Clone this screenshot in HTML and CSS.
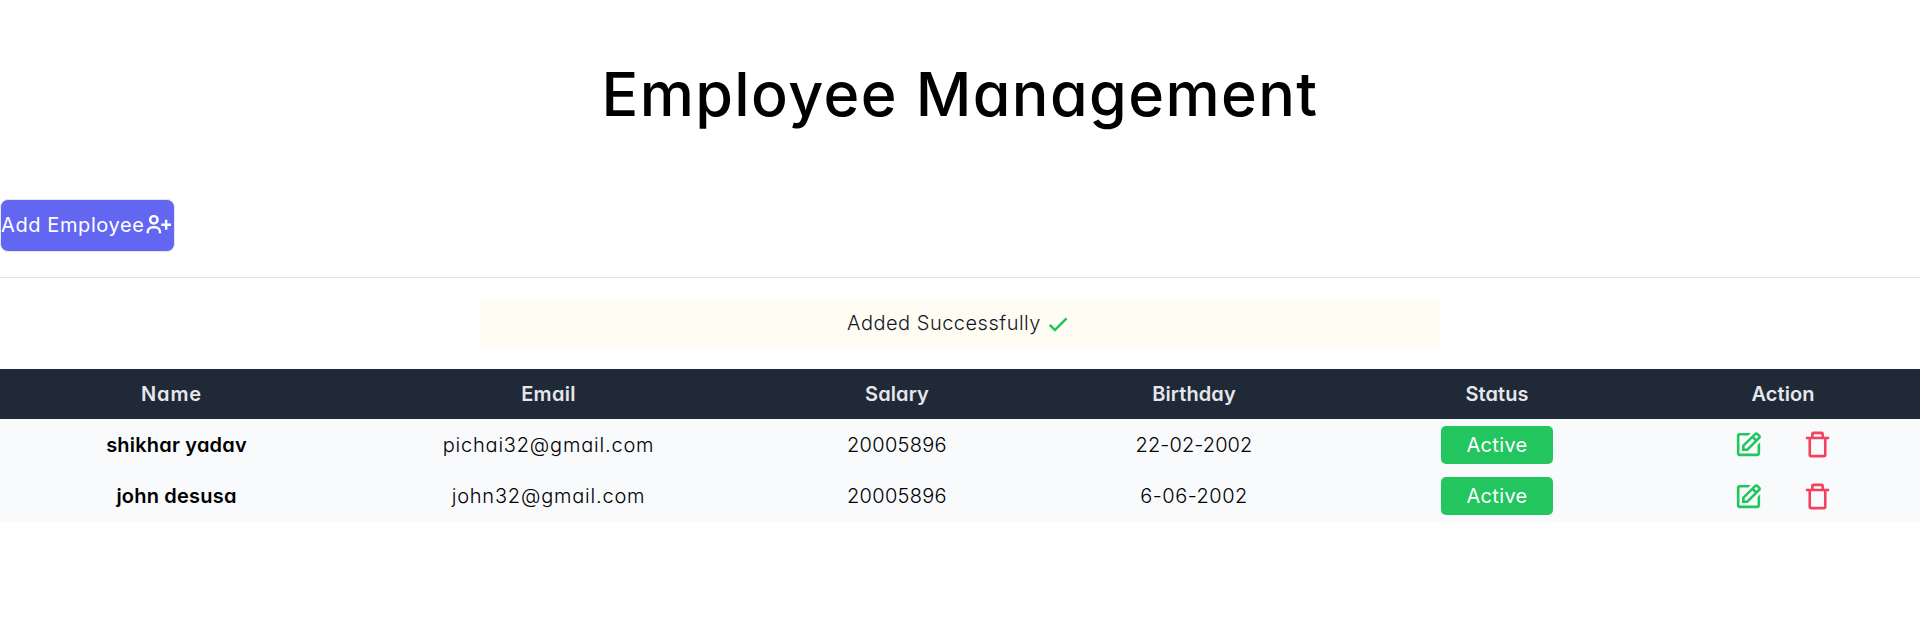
FILE: index.html
```html
<!DOCTYPE html>
<html lang="en">
<head>
<meta charset="utf-8">
<title>Employee Management</title>
<link rel="stylesheet" href="styles.css">
</head>
<body>
<svg class="sprite" aria-hidden="true">
  <symbol id="edit" viewBox="0 0 24 24"><path d="m7 17.013 4.413-.015 9.632-9.54c.378-.378.586-.88.586-1.414s-.208-1.036-.586-1.414l-1.586-1.586c-.756-.756-2.075-.752-2.825-.003L7 12.583v4.43zM18.045 4.458l1.589 1.583-1.597 1.582-1.586-1.585 1.594-1.58zM9 13.417l6.03-5.973 1.586 1.586-6.029 5.971L9 15.006v-1.589z"/><path d="M5 21h14c1.103 0 2-.897 2-2v-8.668l-2 2V19H5V5h6.847l2-2H5c-1.103 0-2 .897-2 2v14c0 1.103.897 2 2 2z"/></symbol>
  <symbol id="trash" viewBox="0 0 24 24"><path d="M5 20a2 2 0 0 0 2 2h10a2 2 0 0 0 2-2V8h2V6h-4V4a2 2 0 0 0-2-2H9a2 2 0 0 0-2 2v2H3v2h2zM9 4h6v2H9zM8 8h9v12H7V8z"/></symbol>
</svg>
<main>
  <h1 class="title">Employee Management</h1>
  <div class="toolbar">
    <button class="add"><span class="add-label">Add Employee</span><svg class="add-icon" viewBox="0 0 24 24"><path d="M19 8h-2v3h-3v2h3v3h2v-3h3v-2h-3zM4 8a3.91 3.91 0 0 0 4 4 3.91 3.91 0 0 0 4-4 3.91 3.91 0 0 0-4-4 3.91 3.91 0 0 0-4 4zm6 0a1.91 1.91 0 0 1-2 2 1.91 1.91 0 0 1-2-2 1.91 1.91 0 0 1 2-2 1.91 1.91 0 0 1 2 2zM4 18a3 3 0 0 1 3-3h2a3 3 0 0 1 3 3v1h2v-1a5 5 0 0 0-5-5H7a5 5 0 0 0-5 5v1h2z"/></svg></button>
  </div>
  <div class="notice"><span class="notice-text">Added Successfully</span><svg class="check" viewBox="0 0 24 24"><path d="m10 15.586-3.293-3.293-1.414 1.414L10 18.414l9.707-9.707-1.414-1.414z"/></svg></div>
  <table class="grid">
    <colgroup><col class="c-name"><col class="c-email"><col class="c-salary"><col class="c-birth"><col class="c-status"><col class="c-action"></colgroup>
    <thead>
      <tr><th><span class="h-name">Name</span></th><th><span class="h-email">Email</span></th><th>Salary</th><th>Birthday</th><th>Status</th><th>Action</th></tr>
    </thead>
    <tbody>
      <tr>
        <td class="name">shikhar yadav</td><td class="email">pichai32@gmail.com</td><td class="salary">20005896</td><td class="birth">22-02-2002</td>
        <td><span class="badge">Active</span></td>
        <td><div class="actions"><svg class="edit"><use href="#edit"/></svg><svg class="trash"><use href="#trash"/></svg></div></td>
      </tr>
      <tr>
        <td class="name">john desusa</td><td class="email">john32@gmail.com</td><td class="salary">20005896</td><td class="birth short">6-06-2002</td>
        <td><span class="badge">Active</span></td>
        <td><div class="actions"><svg class="edit"><use href="#edit"/></svg><svg class="trash"><use href="#trash"/></svg></div></td>
      </tr>
    </tbody>
  </table>
</main>
</body>
</html>
```

FILE: styles.css
```css
* { box-sizing: border-box; }
body {
  margin: 0;
  background: #fff;
  color: #000;
  font: 400 20px/30px Inter, "Liberation Sans", sans-serif;
  font-feature-settings: "cv11";
}
.sprite { display: none; }
svg { fill: currentColor; flex: none; }
.title {
  margin: 0;
  padding: 50px 0;
  text-align: center;
  font-size: 61px;
  line-height: 88px;
  font-weight: 550;
  letter-spacing: 1.4px;
}
.toolbar {
  height: 79px;
  margin-top: 11px;
  border-bottom: 1px solid #e2e3e5;
  display: flex;
  align-items: flex-start;
}
.add {
  display: flex;
  align-items: center;
  width: 175px;
  height: 53px;
  padding: 0;
  border: 1px solid #e5e7eb;
  border-radius: 8px;
  background: #6366f1;
  color: #fff;
  font: inherit;
  font-feature-settings: inherit;
}
.add-label { width: 143px; margin-top: -1px; letter-spacing: 0.6px; white-space: nowrap; text-align: left; }
.add-icon { width: 29.5px; height: 29.5px; margin-top: -1px; }
.notice {
  width: 960px;
  height: 51px;
  margin: 20px auto;
  display: flex;
  align-items: center;
  justify-content: center;
  background: #fffcf3;
  color: #111827;
  font-weight: 350;
}
.notice-text { margin-top: -2px; letter-spacing: 0.5px; }
.check { width: 31px; height: 31px; margin-left: 1px; }
.check { color: #22c55e; }
.grid {
  width: 100%;
  table-layout: fixed;
  border-collapse: collapse;
  background: #f8fafc;
  text-align: center;
}
.c-name { width: 343px; }
.c-email { width: 411px; }
.c-salary { width: 286px; }
.c-birth { width: 308px; }
.c-status { width: 298px; }
.c-action { width: 274px; }
th, td { padding: 0; }
th {
  height: 50px;
  background: #1f2937;
  color: #e5e7eb;
  font-weight: 600;
  letter-spacing: 0.1px;
}
.h-name { letter-spacing: 0.9px; }
.h-email { letter-spacing: 0.3px; }
td { height: 51px; font-weight: 350; }
tbody tr:last-child td { height: 52px; }
.name { padding-left: 10px; font-weight: 600; letter-spacing: 0.2px; }
.email { letter-spacing: 0.8px; }
.salary { letter-spacing: 0.3px; }
.birth { letter-spacing: 0.1px; }
.birth.short { letter-spacing: 0.5px; }
.badge {
  display: block;
  width: 112px;
  height: 38px;
  margin: 0 auto;
  border-radius: 5px;
  background: #22c55e;
  color: #fff;
  line-height: 38px;
  font-weight: 400;
  letter-spacing: 0.35px;
}
.actions { display: flex; align-items: center; padding-left: 87px; gap: 38px; }
.actions svg { width: 31px; height: 31px; }
.edit { color: #22c55e; }
.trash { color: #f43f5e; }
```
